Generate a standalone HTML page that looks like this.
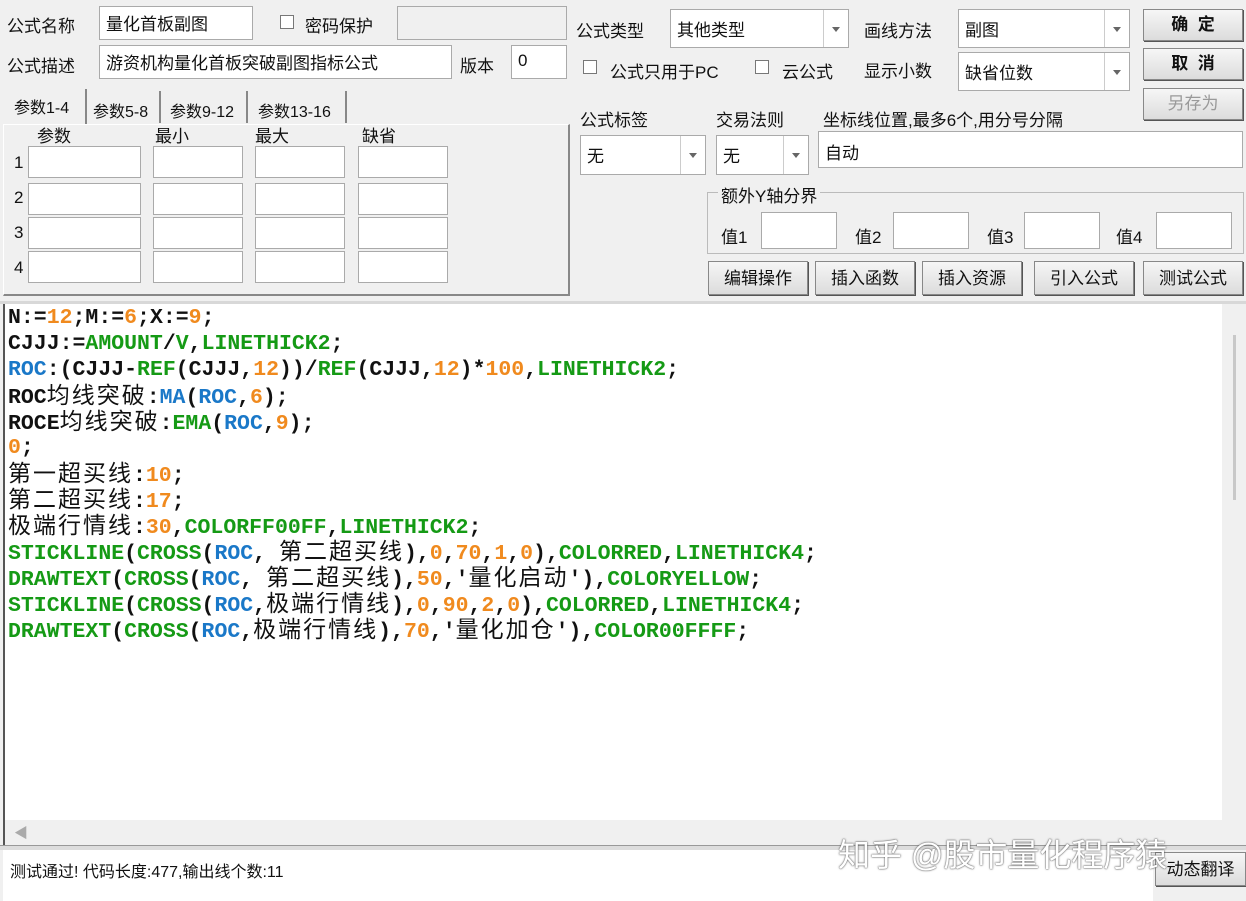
<!DOCTYPE html><html><head><meta charset="utf-8"><style>
body{margin:0;width:1246px;height:901px;background:#f0f0f0;position:relative;overflow:hidden;font-family:"Liberation Sans","Noto Sans CJK SC",sans-serif;font-size:17px;color:#111}
.a{position:absolute}
.in{position:absolute;background:#fff;border:1px solid #aaa;box-sizing:border-box;padding:3px 6px;font-size:17px}
.cb{position:absolute;width:14px;height:14px;background:#fff;border:1px solid #777;box-sizing:border-box}
.dd{position:absolute;background:#fff;border:1px solid #aaa;box-sizing:border-box;padding:6px 6px}
.dd:after{content:"";position:absolute;right:0;top:0;bottom:0;width:24px;border-left:1px solid #ccc;background:#fff}
.dd i{position:absolute;right:8px;top:50%;margin-top:-2px;border:4px solid transparent;border-top:5px solid #666;z-index:2}
.bt{position:absolute;background:linear-gradient(#f6f6f6,#dcdcdc);border:1px solid #888;box-sizing:border-box;text-align:center;font-size:17px;box-shadow:1px 1px 0 #555}
.code{position:absolute;left:8px;top:305px;font-family:"Liberation Mono","Noto Sans CJK SC",monospace;font-weight:bold;font-size:21.5px;color:#111}
.code div{height:26px;line-height:26px;white-space:pre}
.o{color:#f08a1e}.g{color:#159a15}.b{color:#1a78c8}.c{font-family:"Noto Sans CJK SC",sans-serif;font-weight:normal;font-size:23px;line-height:20px;letter-spacing:2px}
.tb{font-size:16px}
</style></head><body>
<div class="a" style="left:7px;top:12px">公式名称</div>
<div class="in" style="left:99px;top:6px;width:154px;height:34px">量化首板副图</div>
<div class="cb" style="left:280px;top:15px"></div>
<div class="a" style="left:305px;top:12px">密码保护</div>
<div class="in" style="left:397px;top:6px;width:170px;height:34px;background:#f0f0f0"></div>
<div class="a" style="left:7px;top:52px">公式描述</div>
<div class="in" style="left:99px;top:45px;width:353px;height:34px">游资机构量化首板突破副图指标公式</div>
<div class="a" style="left:460px;top:52px">版本</div>
<div class="in" style="left:511px;top:45px;width:56px;height:34px;padding-top:5px">0</div>
<div class="a tb" style="left:14px;top:94px">参数1-4</div>
<div class="a" style="left:85px;top:89px;height:36px;border-right:2px solid #888"></div>
<div class="a tb" style="left:93px;top:98px">参数5-8</div>
<div class="a tb" style="left:170px;top:98px">参数9-12</div>
<div class="a tb" style="left:258px;top:98px">参数13-16</div>
<div class="a" style="left:159px;top:91px;height:32px;border-right:2px solid #888"></div>
<div class="a" style="left:246px;top:91px;height:32px;border-right:2px solid #888"></div>
<div class="a" style="left:345px;top:91px;height:32px;border-right:2px solid #888"></div>
<div class="a" style="left:3px;top:124px;width:567px;height:172px;border:1px solid #fff;border-right:2px solid #888;border-bottom:2px solid #888;box-sizing:border-box"></div>
<div class="a" style="left:37px;top:122px">参数</div><div class="a" style="left:155px;top:122px">最小</div><div class="a" style="left:255px;top:122px">最大</div><div class="a" style="left:362px;top:122px">缺省</div>
<div class="a" style="left:14px;top:145px;line-height:35px">1<br>2<br>3<br>4</div>
<div class="in" style="left:28px;top:146px;width:113px;height:32px"></div><div class="in" style="left:153px;top:146px;width:90px;height:32px"></div><div class="in" style="left:255px;top:146px;width:90px;height:32px"></div><div class="in" style="left:358px;top:146px;width:90px;height:32px"></div>
<div class="in" style="left:28px;top:183px;width:113px;height:32px"></div><div class="in" style="left:153px;top:183px;width:90px;height:32px"></div><div class="in" style="left:255px;top:183px;width:90px;height:32px"></div><div class="in" style="left:358px;top:183px;width:90px;height:32px"></div>
<div class="in" style="left:28px;top:217px;width:113px;height:32px"></div><div class="in" style="left:153px;top:217px;width:90px;height:32px"></div><div class="in" style="left:255px;top:217px;width:90px;height:32px"></div><div class="in" style="left:358px;top:217px;width:90px;height:32px"></div>
<div class="in" style="left:28px;top:251px;width:113px;height:32px"></div><div class="in" style="left:153px;top:251px;width:90px;height:32px"></div><div class="in" style="left:255px;top:251px;width:90px;height:32px"></div><div class="in" style="left:358px;top:251px;width:90px;height:32px"></div>
<div class="a" style="left:576px;top:17px">公式类型</div>
<div class="dd" style="left:670px;top:9px;width:179px;height:39px">其他类型<i></i></div>
<div class="a" style="left:864px;top:17px">画线方法</div>
<div class="dd" style="left:958px;top:9px;width:172px;height:39px">副图<i></i></div>
<div class="bt" style="left:1143px;top:9px;width:100px;height:32px;line-height:30px;font-weight:bold">确&nbsp;&nbsp;定</div>
<div class="cb" style="left:583px;top:60px"></div><div class="a" style="left:610px;top:58px">公式只用于PC</div>
<div class="cb" style="left:755px;top:60px"></div><div class="a" style="left:782px;top:58px">云公式</div>
<div class="a" style="left:864px;top:57px">显示小数</div>
<div class="dd" style="left:958px;top:52px;width:172px;height:39px">缺省位数<i></i></div>
<div class="bt" style="left:1143px;top:48px;width:100px;height:32px;line-height:30px;font-weight:bold">取&nbsp;&nbsp;消</div>
<div class="bt" style="left:1143px;top:88px;width:100px;height:32px;line-height:30px;color:#999">另存为</div>
<div class="a" style="left:580px;top:106px">公式标签</div>
<div class="a" style="left:716px;top:106px">交易法则</div>
<div class="a" style="left:823px;top:106px">坐标线位置,最多6个,用分号分隔</div>
<div class="dd" style="left:580px;top:135px;width:126px;height:40px">无<i></i></div>
<div class="dd" style="left:716px;top:135px;width:93px;height:40px">无<i></i></div>
<div class="in" style="left:818px;top:131px;width:425px;height:37px;padding-top:7px">自动</div>
<div class="a" style="left:707px;top:192px;width:535px;height:60px;border:1px solid #bbb"></div>
<div class="a" style="left:718px;top:182px;background:#f0f0f0;padding:0 3px">额外Y轴分界</div>
<div class="a" style="left:721px;top:223px">值1</div><div class="in" style="left:761px;top:212px;width:76px;height:37px"></div>
<div class="a" style="left:855px;top:223px">值2</div><div class="in" style="left:893px;top:212px;width:76px;height:37px"></div>
<div class="a" style="left:987px;top:223px">值3</div><div class="in" style="left:1024px;top:212px;width:76px;height:37px"></div>
<div class="a" style="left:1116px;top:223px">值4</div><div class="in" style="left:1156px;top:212px;width:76px;height:37px"></div>
<div class="bt" style="left:708px;top:261px;width:100px;height:34px;line-height:34px">编辑操作</div>
<div class="bt" style="left:815px;top:261px;width:100px;height:34px;line-height:34px">插入函数</div>
<div class="bt" style="left:922px;top:261px;width:100px;height:34px;line-height:34px">插入资源</div>
<div class="bt" style="left:1034px;top:261px;width:100px;height:34px;line-height:34px">引入公式</div>
<div class="bt" style="left:1143px;top:261px;width:100px;height:34px;line-height:34px">测试公式</div>
<div class="a" style="left:0;top:301px;width:1246px;height:3px;background:#d8d8d8"></div>
<div class="a" style="left:3px;top:304px;width:1221px;height:516px;background:#fff;border-left:2px solid #555"></div>
<div class="a" style="left:1222px;top:304px;width:22px;height:516px;background:#f0f0f0"></div>
<div class="a" style="left:1233px;top:335px;width:3px;height:165px;background:#c8c8c8"></div>
<div class="a" style="left:3px;top:820px;width:1221px;height:25px;background:#f0f0f0;border-left:2px solid #555"></div>
<div class="a" style="left:14px;top:823px;color:#aaa;font-size:14px">◀</div>
<div class="a" style="left:0;top:845px;width:1246px;height:4px;background:#ddd;border-top:1px solid #999"></div>
<div class="a" style="left:3px;top:850px;width:1150px;height:51px;background:#fff"></div>
<div class="a" style="left:10px;top:858px;font-size:16px">测试通过! 代码长度:477,输出线个数:11</div>
<div class="bt" style="left:1155px;top:852px;width:91px;height:34px;line-height:34px">动态翻译</div>
<div class="a" style="left:838px;top:830px;font-size:32px;color:#fff;text-shadow:0 0 2px #666,0 0 1px #333">知乎 @股市量化程序猿</div>
<div class="code"><div>N:=<span class="o">12</span>;M:=<span class="o">6</span>;X:=<span class="o">9</span>;</div><div>CJJJ:=<span class="g">AMOUNT</span>/<span class="g">V</span>,<span class="g">LINETHICK2</span>;</div><div><span class="b">ROC</span>:(CJJJ-<span class="g">REF</span>(CJJJ,<span class="o">12</span>))/<span class="g">REF</span>(CJJJ,<span class="o">12</span>)*<span class="o">100</span>,<span class="g">LINETHICK2</span>;</div><div>ROC<span class="c">均线突破</span>:<span class="b">MA</span>(<span class="b">ROC</span>,<span class="o">6</span>);</div><div>ROCE<span class="c">均线突破</span>:<span class="g">EMA</span>(<span class="b">ROC</span>,<span class="o">9</span>);</div><div><span class="o">0</span>;</div><div><span class="c">第一超买线</span>:<span class="o">10</span>;</div><div><span class="c">第二超买线</span>:<span class="o">17</span>;</div><div><span class="c">极端行情线</span>:<span class="o">30</span>,<span class="g">COLORFF00FF</span>,<span class="g">LINETHICK2</span>;</div><div><span class="g">STICKLINE</span>(<span class="g">CROSS</span>(<span class="b">ROC</span>, <span class="c">第二超买线</span>),<span class="o">0</span>,<span class="o">70</span>,<span class="o">1</span>,<span class="o">0</span>),<span class="g">COLORRED</span>,<span class="g">LINETHICK4</span>;</div><div><span class="g">DRAWTEXT</span>(<span class="g">CROSS</span>(<span class="b">ROC</span>, <span class="c">第二超买线</span>),<span class="o">50</span>,'<span class="c">量化启动</span>'),<span class="g">COLORYELLOW</span>;</div><div><span class="g">STICKLINE</span>(<span class="g">CROSS</span>(<span class="b">ROC</span>,<span class="c">极端行情线</span>),<span class="o">0</span>,<span class="o">90</span>,<span class="o">2</span>,<span class="o">0</span>),<span class="g">COLORRED</span>,<span class="g">LINETHICK4</span>;</div><div><span class="g">DRAWTEXT</span>(<span class="g">CROSS</span>(<span class="b">ROC</span>,<span class="c">极端行情线</span>),<span class="o">70</span>,'<span class="c">量化加仓</span>'),<span class="g">COLOR00FFFF</span>;</div></div>
</body></html>
